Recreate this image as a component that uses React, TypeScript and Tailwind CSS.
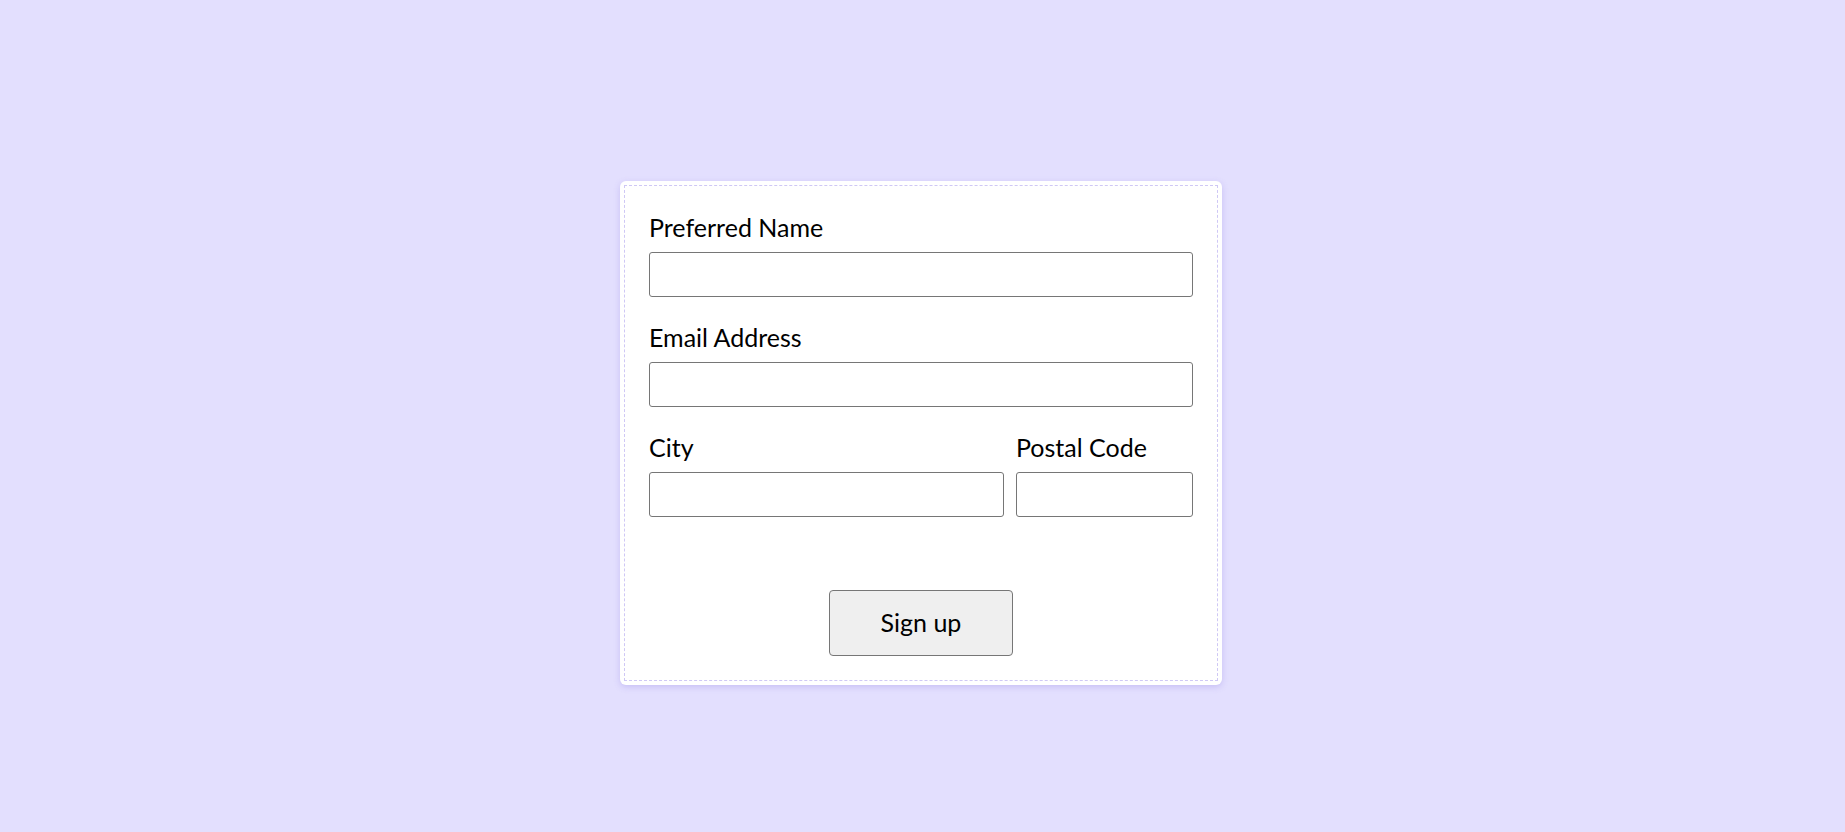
export default function App() {
  return (
    <div
      className="flex min-h-screen w-full items-center justify-center bg-[#e3dffe] pt-[34px]"
      style={{ fontFamily: "Lato, 'Noto Sans', sans-serif" }}
    >
      <div className="mr-[3px] w-[602px] rounded-md bg-white p-1 shadow-[0_2px_6px_rgba(120,100,220,0.25)]">
        <form
          className="flex flex-col gap-[23px] border border-dashed border-[#cfc8f5] p-6"
          onSubmit={(e) => e.preventDefault()}
        >
          <div className="flex flex-col gap-[7px]">
            <label className="text-[25px] leading-[35px] text-black">Preferred Name</label>
            <input className="h-[45px] rounded-[3px] border border-[#767676] px-2" />
          </div>
          <div className="flex flex-col gap-[7px]">
            <label className="text-[25px] leading-[35px] text-black">Email Address</label>
            <input className="h-[45px] rounded-[3px] border border-[#767676] px-2" />
          </div>
          <div className="flex gap-3">
            <div className="flex flex-1 flex-col gap-[7px]">
              <label className="text-[25px] leading-[35px] text-black">City</label>
              <input className="h-[45px] w-full rounded-[3px] border border-[#767676] px-2" />
            </div>
            <div className="flex w-[177px] flex-col gap-[7px]">
              <label className="text-[25px] leading-[35px] text-black">Postal Code</label>
              <input className="h-[45px] w-full rounded-[3px] border border-[#767676] px-2" />
            </div>
          </div>
          <div className="mt-[50px] flex justify-center">
            <button
              type="submit"
              className="h-[66px] w-[184px] rounded-[4px] border border-[#767676] bg-[#efefef] text-[25px] text-black"
            >
              Sign up
            </button>
          </div>
        </form>
      </div>
    </div>
  );
}
